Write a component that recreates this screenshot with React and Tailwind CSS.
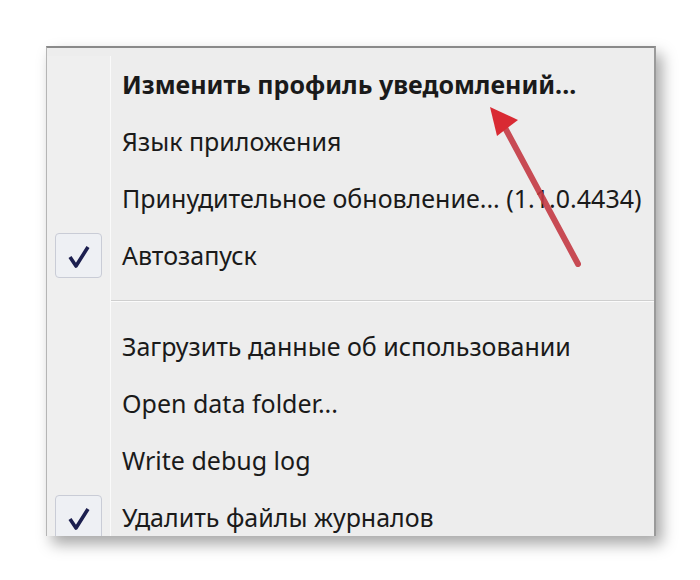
const items = [
  { label: "Изменить профиль уведомлений...", bold: true },
  { label: "Язык приложения" },
  { label: "Принудительное обновление... (1.1.0.4434)" },
  { label: "Автозапуск", checked: true },
  { separator: true },
  { label: "Загрузить данные об использовании" },
  { label: "Open data folder..." },
  { label: "Write debug log" },
  { label: "Удалить файлы журналов", checked: true },
]

const Check = () => (
  <div className="w-[47px] h-[45px] rounded-[4px] border border-[#c9ccd6] bg-[#eef0f4] flex items-center justify-center">
    <svg width="28" height="28" viewBox="0 0 28 28">
      <path d="M5 15 L11 24 L23 5" fill="none" stroke="#1c1f4f" strokeWidth="3.6" strokeLinejoin="round" />
    </svg>
  </div>
)

const App = () => {
  return (
    <div className="w-[700px] h-[580px] bg-white pl-[46px] pt-[46px] relative" style={{ fontFamily: '"Noto Sans", "Open Sans", sans-serif' }}>
      <div className="w-[610px] h-[490px] bg-[#ededed] border-t-2 border-t-[#8a8a8a] border-l border-l-[#b5b5b5] border-r-2 border-r-[#9a9a9a] overflow-hidden shadow-[6px_8px_14px_rgba(0,0,0,0.35)] flex flex-col pt-[8px]">
        {items.map((item, i) =>
          item.separator ? (
            <div key={i} className="flex h-[34px] shrink-0">
              <div className="w-[64px] border-r border-r-[#fafafa] bg-[#efefef]" />
              <div className="flex-1 flex flex-col justify-center">
                <div className="h-px bg-[#cfcfcf]" />
                <div className="h-px bg-[#fbfbfb]" />
              </div>
            </div>
          ) : (
            <div key={i} className="flex h-[57px] shrink-0">
              <div className="w-[64px] border-r border-r-[#fafafa] bg-[#efefef] flex items-center justify-center">
                {item.checked && <Check />}
              </div>
              <div className={`flex-1 flex items-center pl-[11px] text-[25px] text-[#1a1a1a] whitespace-nowrap ${item.bold ? "font-bold" : ""}`}>
                {item.label}
              </div>
            </div>
          )
        )}
      </div>
      <svg className="absolute left-0 top-0 pointer-events-none" width="700" height="580">
        <line x1="578" y1="264" x2="503" y2="124" stroke="#c43a44" strokeWidth="6" strokeLinecap="round" opacity="0.9" />
        <polygon points="490,107 518,120 497,136" fill="#d92a33" />
      </svg>
    </div>
  )
}

export default App
